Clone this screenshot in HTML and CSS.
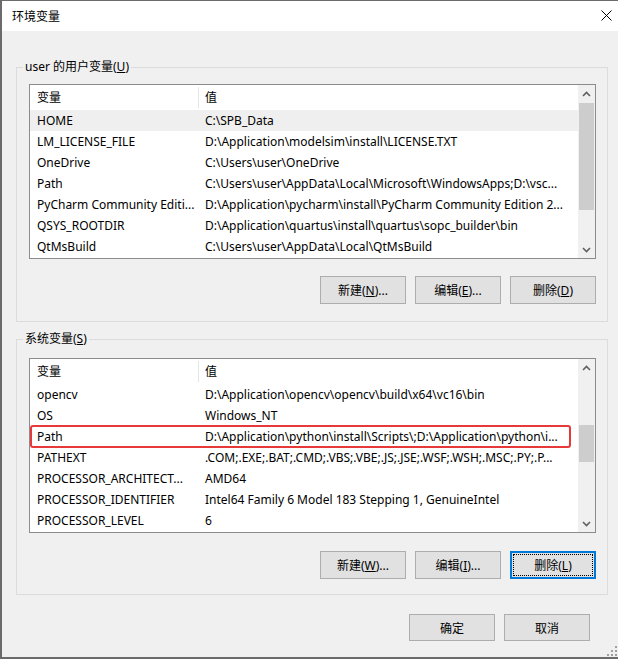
FILE: index.html
```html
<!DOCTYPE html>
<html lang="zh-CN">
<head>
<meta charset="utf-8">
<title>环境变量</title>
<link rel="stylesheet" href="styles.css">
</head>
<body>
<div class="window">
  <div class="titlebar">
    <span class="title">环境变量</span>
    <svg class="close" width="11" height="11" viewBox="0 0 11 11"><path d="M0.5 0.5 L10.5 10.5 M10.5 0.5 L0.5 10.5" stroke="#000" stroke-width="1" fill="none"/></svg>
  </div>
  <div class="content">
    <fieldset class="group group-user">
      <legend>user 的用户变量(<u>U</u>)</legend>
      <div class="group-body">
        <div class="list list-user">
          <div class="list-main">
            <div class="list-header"><div class="h-name">变量</div><div class="h-value">值</div></div>
            <div class="row selected"><div class="c-name">HOME</div><div class="c-value">C:\SPB_Data</div></div>
            <div class="row"><div class="c-name">LM_LICENSE_FILE</div><div class="c-value">D:\Application\modelsim\install\LICENSE.TXT</div></div>
            <div class="row"><div class="c-name">OneDrive</div><div class="c-value">C:\Users\user\OneDrive</div></div>
            <div class="row"><div class="c-name">Path</div><div class="c-value">C:\Users\user\AppData\Local\Microsoft\WindowsApps;D:\vsc...</div></div>
            <div class="row"><div class="c-name">PyCharm Community Editi...</div><div class="c-value">D:\Application\pycharm\install\PyCharm Community Edition 2...</div></div>
            <div class="row"><div class="c-name">QSYS_ROOTDIR</div><div class="c-value">D:\Application\quartus\install\quartus\sopc_builder\bin</div></div>
            <div class="row"><div class="c-name">QtMsBuild</div><div class="c-value">C:\Users\user\AppData\Local\QtMsBuild</div></div>
          </div>
          <div class="scrollbar">
            <div class="arrow"><svg width="9" height="6" viewBox="0 0 9 6"><path d="M1 5 L4.5 1.5 L8 5" stroke="#606060" stroke-width="1.6" fill="none"/></svg></div>
            <div class="track"><div class="thumb thumb-user"></div></div>
            <div class="arrow"><svg width="9" height="6" viewBox="0 0 9 6"><path d="M1 1 L4.5 4.5 L8 1" stroke="#606060" stroke-width="1.6" fill="none"/></svg></div>
          </div>
        </div>
        <div class="buttons buttons-user">
          <button class="btn">新建(<u>N</u>)...</button>
          <button class="btn">编辑(<u>E</u>)...</button>
          <button class="btn">删除(<u>D</u>)</button>
        </div>
      </div>
    </fieldset>

    <fieldset class="group group-sys">
      <legend>系统变量(<u>S</u>)</legend>
      <div class="group-body">
        <div class="list list-sys">
          <div class="list-main">
            <div class="list-header"><div class="h-name">变量</div><div class="h-value">值</div></div>
            <div class="row"><div class="c-name">opencv</div><div class="c-value">D:\Application\opencv\opencv\build\x64\vc16\bin</div></div>
            <div class="row"><div class="c-name">OS</div><div class="c-value">Windows_NT</div></div>
            <div class="row marked"><div class="c-name">Path</div><div class="c-value">D:\Application\python\install\Scripts\;D:\Application\python\i...</div><div class="mark"></div></div>
            <div class="row"><div class="c-name">PATHEXT</div><div class="c-value">.COM;.EXE;.BAT;.CMD;.VBS;.VBE;.JS;.JSE;.WSF;.WSH;.MSC;.PY;.P...</div></div>
            <div class="row"><div class="c-name">PROCESSOR_ARCHITECT...</div><div class="c-value">AMD64</div></div>
            <div class="row"><div class="c-name">PROCESSOR_IDENTIFIER</div><div class="c-value">Intel64 Family 6 Model 183 Stepping 1, GenuineIntel</div></div>
            <div class="row"><div class="c-name">PROCESSOR_LEVEL</div><div class="c-value">6</div></div>
          </div>
          <div class="scrollbar">
            <div class="arrow"><svg width="9" height="6" viewBox="0 0 9 6"><path d="M1 5 L4.5 1.5 L8 5" stroke="#606060" stroke-width="1.6" fill="none"/></svg></div>
            <div class="track"><div class="thumb thumb-sys"></div></div>
            <div class="arrow"><svg width="9" height="6" viewBox="0 0 9 6"><path d="M1 1 L4.5 4.5 L8 1" stroke="#606060" stroke-width="1.6" fill="none"/></svg></div>
          </div>
        </div>
        <div class="buttons buttons-sys">
          <button class="btn">新建(<u>W</u>)...</button>
          <button class="btn">编辑(<u>I</u>)...</button>
          <button class="btn focused">删除(<u>L</u>)</button>
        </div>
      </div>
    </fieldset>

    <div class="footer">
      <button class="btn btn-footer">确定</button>
      <button class="btn btn-footer">取消</button>
    </div>
  </div>
  <svg class="grip" width="10" height="10" viewBox="0 0 10 10">
    <rect x="8" y="0" width="2" height="2" fill="#a0a0a0"/>
    <rect x="4" y="4" width="2" height="2" fill="#a0a0a0"/>
    <rect x="8" y="4" width="2" height="2" fill="#a0a0a0"/>
    <rect x="0" y="8" width="2" height="2" fill="#a0a0a0"/>
    <rect x="4" y="8" width="2" height="2" fill="#a0a0a0"/>
    <rect x="8" y="8" width="2" height="2" fill="#a0a0a0"/>
  </svg>
</div>
</body>
</html>
```
FILE: styles.css
```css
* { box-sizing: border-box; }
html, body { margin: 0; padding: 0; }
body {
  width: 618px;
  height: 659px;
  overflow: hidden;
  background: #f0f0f0;
  font-family: "Noto Sans", "Noto Sans CJK SC", sans-serif;
  font-size: 12px;
  color: #000;
}
.window {
  position: relative;
  width: 618px;
  height: 659px;
  border-top: 1px solid #6b6b6b;
  border-left: 2px solid #6b6b6b;
  border-bottom: 2px solid #6b6b6b;
  background: #f0f0f0;
  display: flex;
  flex-direction: column;
}
.titlebar {
  height: 30px;
  background: #fff;
  display: flex;
  align-items: center;
  justify-content: space-between;
  padding: 0 6px 0 10px;
  flex: none;
}
.title {
  font-family: "Noto Sans CJK SC", sans-serif;
  font-size: 12px;
  line-height: 16px;
}
.close { display: block; margin-top: -1px; }
.content {
  padding: 28px 10px 0 14px;
  display: flex;
  flex-direction: column;
}
.group {
  margin: 0;
  padding: 0;
  border: 1px solid #dcdcdc;
  min-width: 0;
}
.group legend {
  margin-left: 6px;
  padding: 0 2px;
  line-height: 16px;
  height: 16px;
  font-size: 12px;
}
.group-sys { margin-top: 9px; }
.group-body {
  padding: 0 11px 0 12px;
}
.group-user .group-body { padding-top: 9px; padding-bottom: 17px; }
.group-sys .group-body { padding-top: 11px; padding-bottom: 15px; }

.list {
  height: 175px;
  border: 1px solid #8c8c8c;
  background: #fff;
  display: flex;
}
.list-main {
  flex: 1;
  min-width: 0;
  display: flex;
  flex-direction: column;
}
.list-header {
  height: 25px;
  display: flex;
  align-items: center;
  flex: none;
}
.h-name {
  width: 169px;
  padding-left: 7px;
  height: 21px;
  line-height: 21px;
  border-right: 1px solid #e5e5e5;
  flex: none;
}
.h-value {
  padding-left: 6px;
  line-height: 21px;
}
.row {
  position: relative;
  height: 21px;
  line-height: 21px;
  display: flex;
  flex: none;
  white-space: nowrap;
}
.row.selected { background: #efefef; }
.c-name {
  width: 169px;
  padding-left: 7px;
  overflow: hidden;
  flex: none;
}
.c-value {
  padding-left: 6px;
  overflow: hidden;
  flex: 1;
  min-width: 0;
}
.mark {
  position: absolute;
  left: 0;
  top: -1px;
  width: 541px;
  height: 23px;
  border: 2px solid #e8393a;
  border-radius: 3px;
}
.scrollbar {
  width: 17px;
  flex: none;
  background: #f0f0f0;
  display: flex;
  flex-direction: column;
}
.arrow {
  height: 17px;
  display: flex;
  align-items: center;
  justify-content: center;
  flex: none;
}
.arrow svg { display: block; }
.track {
  flex: 1;
  padding: 0 1px;
}
.thumb { background: #cdcdcd; }
.thumb-user { margin-top: 1px; height: 107px; }
.thumb-sys { margin-top: 49px; height: 37px; }

.buttons {
  display: flex;
  justify-content: flex-end;
  gap: 9px;
}
.buttons-user { margin-top: 17px; }
.buttons-sys { margin-top: 18px; }
.btn {
  position: relative;
  width: 86px;
  height: 28px;
  margin: 0;
  padding: 0;
  background: #e1e1e1;
  border: 1px solid #adadad;
  font-family: "Noto Sans", "Noto Sans CJK SC", sans-serif;
  font-size: 12px;
  color: #000;
}
.btn.focused { border: 2px solid #0078d7; }
.btn.focused::after {
  content: "";
  position: absolute;
  left: 1px; top: 1px; right: 1px; bottom: 1px;
  border: 1px dotted #000;
}
.footer {
  margin-top: 19px;
  display: flex;
  justify-content: flex-end;
  gap: 9px;
  padding-right: 18px;
}
.btn-footer { height: 27px; }
.grip {
  position: absolute;
  right: 1px;
  bottom: 1px;
}
```
